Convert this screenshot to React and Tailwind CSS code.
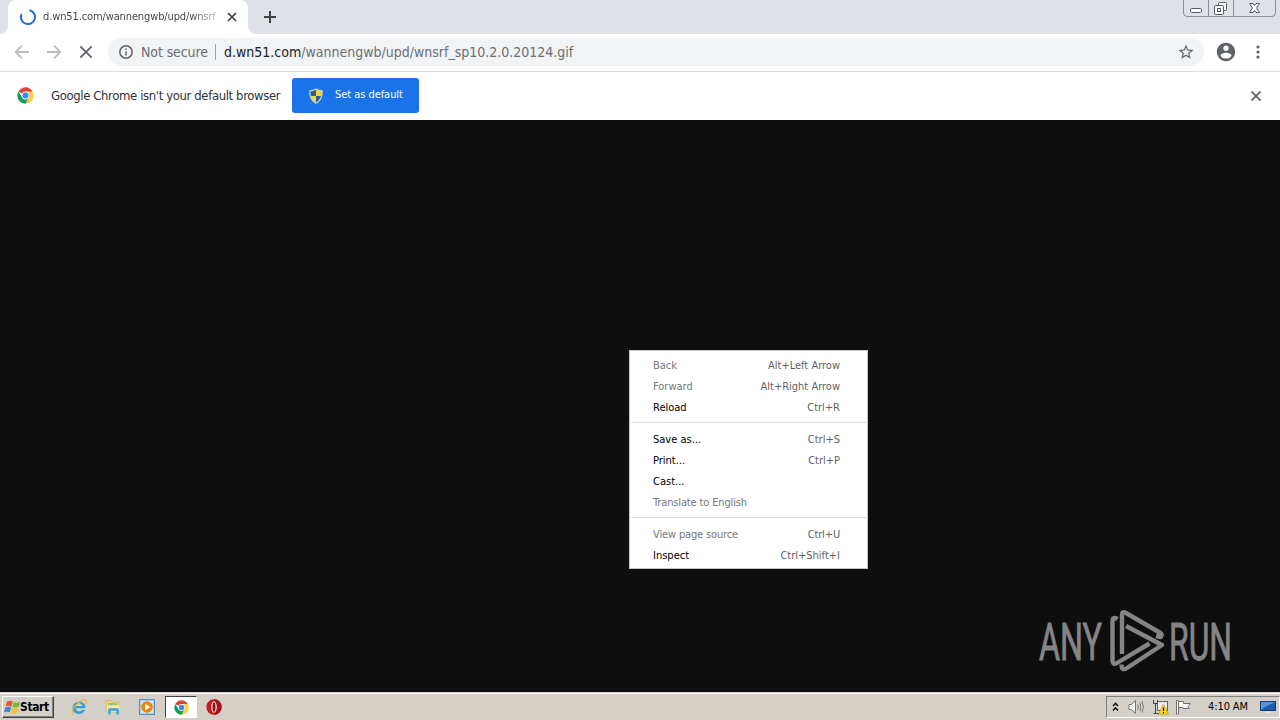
import { useId } from "react";

const menuGroups = [
    [
        { label: "Back", keys: "Alt+Left Arrow", disabled: true },
        { label: "Forward", keys: "Alt+Right Arrow", disabled: true },
        { label: "Reload", keys: "Ctrl+R" },
    ],
    [
        { label: "Save as...", keys: "Ctrl+S" },
        { label: "Print...", keys: "Ctrl+P" },
        { label: "Cast..." },
        { label: "Translate to English", disabled: true, tight: true },
    ],
    [
        { label: "View page source", keys: "Ctrl+U", disabled: true, tight: true },
        { label: "Inspect", keys: "Ctrl+Shift+I" },
    ],
];

const ChromeLogo = ({ className }) => (
    <svg viewBox="0 0 48 48" className={className}>
        <circle cx="24" cy="24" r="23" fill="#fff" />
        <path d="M24 24 L4.1 12.5 A23 23 0 0 1 43.9 12.5 Z" fill="#db4437" />
        <path d="M24 13 H44.2 A23 23 0 0 1 24 47 L33.5 29.5 Z" fill="#ffcd40" />
        <path d="M4.1 12.5 L14.5 29.5 L24 35 L33.5 29.5 L24 47 A23 23 0 0 1 4.1 12.5 Z" fill="#0f9d58" />
        <circle cx="24" cy="24" r="11" fill="#f1f1f1" />
        <circle cx="24" cy="24" r="8.5" fill="#4285f4" />
    </svg>
);

const Shield = ({ className }) => {
    const id = useId();
    const outline = "M8 1 C6 2.3 3.8 2.8 1.8 2.8 C1.6 8 3 12.5 8 15.2 C13 12.5 14.4 8 14.2 2.8 C12.2 2.8 10 2.3 8 1 Z";

    return (
        <svg viewBox="0 0 16 16" className={className}>
            <clipPath id={id}>
                <path d={outline} />
            </clipPath>
            <g clipPath={`url(#${id})`}>
                <rect width="8" height="8" fill="#28609f" />
                <rect x="8" width="8" height="8" fill="#f3d53a" />
                <rect y="8" width="8" height="8" fill="#f3d53a" />
                <rect x="8" y="8" width="8" height="8" fill="#28609f" />
            </g>
            <path d={outline} fill="none" stroke="#c9cfbd" strokeWidth="1.3" />
        </svg>
    );
};

const TabStrip = () => (
    <div className="flex h-[34px] items-start bg-[#dee1e6]">
        <div className="relative ml-2 flex h-[34px] w-60 items-center rounded-t-lg bg-white pl-3">
            <svg viewBox="0 0 8 8" className="absolute bottom-0 -left-2 size-2">
                <path d="M8 0 A8 8 0 0 1 0 8 H8 Z" fill="#fff" />
            </svg>
            <svg viewBox="0 0 8 8" className="absolute -right-2 bottom-0 size-2">
                <path d="M0 0 A8 8 0 0 0 8 8 H0 Z" fill="#fff" />
            </svg>
            <svg viewBox="0 0 16 16" className="size-4" fill="none" stroke="#1a6fd8" strokeWidth="2">
                <path d="M9.5 1.2 A7 7 0 1 1 1.6 5.2" />
            </svg>
            <span className="ml-[7px] w-[175px] bg-linear-to-r from-[#3c4043] from-85% to-[#3c404340] bg-clip-text pt-px text-[11px] tracking-[-0.12px] whitespace-nowrap text-transparent">
                d.wn51.com/wannengwb/upd/wnsrf
            </span>
            <svg viewBox="0 0 10 10" className="ml-[9px] size-[10px]" stroke="#3c4043" strokeWidth="1.7">
                <path d="M1 1 L9 9 M9 1 L1 9" />
            </svg>
        </div>
        <svg viewBox="0 0 12 12" className="mt-[11px] ml-4 size-3" stroke="#3c4043" strokeWidth="2">
            <path d="M6 0 V12 M0 6 H12" />
        </svg>
        <WindowButtons />
    </div>
);

const WindowButtons = () => (
    <svg viewBox="0 0 97 18" className="ml-auto h-[18px] w-[97px]" fill="none" stroke="#8b8f98">
        <path d="M0.5 0 V13 Q0.5 16.5 4 16.5 H89 Q92.5 16.5 92.5 13 V0 M25.5 0 V16 M50.5 0 V16" />
        <g stroke="#555a63">
            <rect x="7.5" y="8.5" width="11" height="4" rx="1" fill="#fff" />
            <rect x="35.5" y="2.5" width="8" height="8" rx="1" fill="#f2f3f5" />
            <rect x="31.5" y="5.5" width="9" height="9" rx="1" fill="#fff" />
            <rect x="34.5" y="8.5" width="3" height="3" />
            <path d="M66.5 3.5 H70 L71.5 5.5 L73 3.5 H76.5 L73.5 8 L76.5 12.5 H73 L71.5 10.5 L70 12.5 H66.5 L69.5 8 Z" fill="#fff" />
        </g>
    </svg>
);

const Toolbar = () => (
    <div className="flex h-[38px] items-center border-b border-[#dadce0] bg-white pb-px">
        <svg viewBox="0 0 16 16" className="ml-[14px] size-4" fill="none" stroke="#babcbe" strokeWidth="1.8">
            <path d="M15 8 H2.5 M8 1.7 L1.7 8 L8 14.3" />
        </svg>
        <svg viewBox="0 0 16 16" className="ml-4 size-4" fill="none" stroke="#babcbe" strokeWidth="1.8">
            <path d="M1 8 H13.5 M8 1.7 L14.3 8 L8 14.3" />
        </svg>
        <svg viewBox="0 0 16 16" className="ml-4 size-4" stroke="#5f6368" strokeWidth="1.8">
            <path d="M2.3 2.3 L13.7 13.7 M13.7 2.3 L2.3 13.7" />
        </svg>
        <div className="ml-[14px] flex h-7 w-[1096px] items-center rounded-full bg-[#f1f3f4] pl-[11px]">
            <svg viewBox="0 0 14 14" className="size-[14px]" fill="none" stroke="#5f6368" strokeWidth="1.5">
                <circle cx="7" cy="7" r="6.2" />
                <path d="M7 6.2 V10.4 M7 3.5 V5" />
            </svg>
            <span className="ml-2 w-[67px] text-[14px] tracking-[-0.1px] whitespace-nowrap text-[#6b6f74]">Not secure</span>
            <span className="ml-[7px] h-4 w-px bg-[#9fa3a8]" />
            <span className="ml-2 text-[14px] whitespace-nowrap text-[#6b6f74]">
                <span className="text-[#202124]">d.wn51.com</span>/wannengwb/upd/wnsrf_sp10.2.0.20124.gif
            </span>
            <svg viewBox="0 0 24 24" className="mr-[9px] ml-auto size-[18px]" fill="#5f6368">
                <path d="M22 9.24l-7.19-.62L12 2 9.19 8.63 2 9.24l5.46 4.73L5.82 21 12 17.27 18.18 21l-1.63-7.03L22 9.24zM12 15.4l-3.76 2.27 1-4.28-3.32-2.88 4.38-.38L12 6.1l1.71 4.04 4.38.38-3.32 2.88 1 4.28L12 15.4z" />
            </svg>
        </div>
        <svg viewBox="0 0 24 24" className="ml-[11px] size-[22px]" fill="#5f6368">
            <path d="M12 2C6.48 2 2 6.48 2 12s4.48 10 10 10 10-4.48 10-10S17.52 2 12 2zm0 3c1.66 0 3 1.34 3 3s-1.34 3-3 3-3-1.34-3-3 1.34-3 3-3zm0 14.2c-2.5 0-4.71-1.28-6-3.22.03-1.99 4-3.08 6-3.08 1.99 0 5.97 1.09 6 3.08-1.29 1.94-3.5 3.22-6 3.22z" />
        </svg>
        <svg viewBox="0 0 4 14" className="ml-[19px] h-[14px] w-1" fill="#5f6368">
            <circle cx="2" cy="2" r="1.6" />
            <circle cx="2" cy="7" r="1.6" />
            <circle cx="2" cy="12" r="1.6" />
        </svg>
    </div>
);

const InfoBar = () => (
    <div className="flex h-12 items-center bg-white pb-px">
        <ChromeLogo className="ml-[17px] size-[17px]" />
        <span className="ml-[17px] w-[229px] text-[13px] tracking-[-0.38px] whitespace-nowrap text-[#303236]">
            Google Chrome isn't your default browser
        </span>
        <button className="ml-3 flex h-[35px] w-[127px] items-center rounded-[3px] bg-[#1a73e8] pl-4 text-[11px] text-white">
            <Shield className="size-4" />
            <span className="ml-[11px] tracking-[-0.05px] whitespace-nowrap">Set as default</span>
        </button>
        <svg viewBox="0 0 10 10" className="mr-[19px] ml-auto size-[10px]" stroke="#5f6368" strokeWidth="1.8">
            <path d="M0.5 0.5 L9.5 9.5 M9.5 0.5 L0.5 9.5" />
        </svg>
    </div>
);

const ContextMenu = () => (
    <div className="absolute top-[350px] left-[629px] h-[219px] w-[239px] border border-[#c8c8c8] bg-white pt-1 text-[11px]">
        {menuGroups.map((group, i) => (
            <div key={i}>
                {i > 0 && <div className="mx-px mt-1 mb-1.5 h-px bg-[#dcdcdc]" />}
                {group.map(item => (
                    <div
                        key={item.label}
                        className={`flex h-[21px] items-center justify-between pt-0.5 pr-[27px] pl-[23px] whitespace-nowrap ${item.tight ? "tracking-[-0.14px]" : ""}`}
                    >
                        <span className={item.disabled ? "text-[#75777a]" : "text-black"}>{item.label}</span>
                        <span className="text-[#5f6163]">{item.keys}</span>
                    </div>
                ))}
            </div>
        ))}
    </div>
);

const Watermark = () => (
    <svg viewBox="0 0 220 70" className="absolute top-[606px] left-[1035px] h-[70px] w-[220px]">
        <g fill="#858585" stroke="#858585" strokeWidth="0.9" fontFamily="Roboto, sans-serif" fontSize="52">
            <text x="4" y="54" textLength="63" lengthAdjust="spacingAndGlyphs">ANY</text>
            <text x="134" y="54" textLength="63" lengthAdjust="spacingAndGlyphs">RUN</text>
        </g>
        <g fill="none" stroke="#858585" strokeWidth="4.4" strokeLinejoin="round">
            <path d="M82.5 13 Q77.5 10 77.5 16 V55 Q78 59.5 82 57 L114.5 37.5" />
            <path d="M87 48 V9 Q87 4.5 91 7 L125.5 27 Q128 29 125.5 31 L121 30" />
            <path d="M91 20 L127 39 L92 62 Q86.5 65.5 86.5 58.5" />
        </g>
    </svg>
);

const InternetExplorer = () => (
    <svg viewBox="0 0 16 16" className="size-4">
        <path d="M14.3 9.2 H4.6 C4.8 12.8 9.8 13.2 11 10.9 H14 C11.5 17.2 1.6 16 1.6 8.7 C1.6 1 14.8 0.4 14.3 9.2 Z M4.7 6.9 H11.3 C11 3.4 5.2 3.4 4.7 6.9 Z" fill="#2f9fdc" fillRule="evenodd" />
        <path d="M1.6 14.9 C-1.2 10 10 -0.4 14.7 1.2 C15.9 1.8 15.2 3.5 14.4 5" fill="none" stroke="#e2b83c" strokeWidth="1.3" />
    </svg>
);

const Explorer = () => (
    <svg viewBox="0 0 16 16" className="size-4">
        <path d="M1 1.5 H6 L7 3 H14 V13 H1 Z" fill="#f4d979" stroke="#d2b052" strokeWidth="0.7" />
        <path d="M3 4.3 H12 V5.8 H3 Z" fill="#76bd8d" />
        <path d="M1.5 6.3 H15 L14.5 13 H2 Z" fill="#faeaa5" stroke="#dcc277" strokeWidth="0.5" />
        <path d="M3 15.5 V11 Q3 9 5 9 H12 Q14 9 14 11 V15.5 H11.2 V12 H5.8 V15.5 Z" fill="#4fa6d8" />
    </svg>
);

const MediaPlayer = () => (
    <svg viewBox="0 0 16 16" className="size-4">
        <rect x="0.5" y="0.5" width="15" height="15" fill="#a8cdec" stroke="#5a8fc6" />
        <rect x="2" y="2" width="12" height="12" fill="#d3e8f8" />
        <circle cx="8" cy="8" r="5.8" fill="#ee8412" />
        <path d="M6.2 4.7 L11.3 8 L6.2 11.3 Z" fill="#fff" />
    </svg>
);

const Opera = () => (
    <svg viewBox="0 0 16 16" className="size-4">
        <circle cx="8" cy="8" r="7.7" fill="#c41a22" />
        <path d="M8 0.3 A7.7 7.7 0 0 1 8 15.7 Z" fill="#a31119" />
        <ellipse cx="8" cy="8" rx="2.8" ry="5.8" fill="#f6e9e9" />
        <ellipse cx="8" cy="8" rx="1.5" ry="4.8" fill="#8d1017" />
    </svg>
);

const WindowsFlag = () => (
    <svg viewBox="0 0 17 16" className="h-4 w-[17px]">
        <path d="M3 2.5 Q6 0.8 8.7 2.5 L7.4 7.4 Q4.5 6 1.6 7.4 Z" fill="#e4572b" />
        <path d="M9.6 3 Q12.5 4.6 16 2.8 L14.6 7.8 Q11.3 9.2 8.3 7.8 Z" fill="#79b53b" />
        <path d="M1.3 8.4 Q4.2 7 7.1 8.4 L5.8 13.3 Q3 12 0 13.3 Z" fill="#3f86cf" />
        <path d="M8 8.8 Q11 10.2 14.3 8.8 L13 13.7 Q9.8 15.3 6.7 13.7 Z" fill="#f5c131" />
    </svg>
);

const Tray = () => (
    <div className="ml-auto flex h-[22px] w-[174px] items-center border border-t-[#808080] border-r-white border-b-white border-l-[#808080]">
        <svg viewBox="0 0 7 10" className="ml-[5px] h-[10px] w-[7px]" fill="none" stroke="#000" strokeWidth="1.3">
            <path d="M1 4 L3.5 1.3 L6 4 M1 8.5 L3.5 5.8 L6 8.5" />
        </svg>
        <svg viewBox="0 0 17 16" className="ml-[9px] h-4 w-[17px]" fill="none" stroke="#777" strokeWidth="1">
            <path d="M1 5.5 H3.5 L7.5 1.5 V14.5 L3.5 10.5 H1 Z" fill="#f5f5f5" />
            <path d="M9.7 5.5 Q11 8 9.7 10.5 M11.8 3.8 Q14 8 11.8 12.2 M14 2.3 Q17 8 14 13.7" />
        </svg>
        <svg viewBox="0 0 17 16" className="ml-[7px] h-4 w-[17px]">
            <rect x="5.5" y="2.5" width="10" height="9" fill="#e6eaee" stroke="#666" />
            <path d="M1.5 1 V4.5 H5.5 V1 M3.5 4.5 V14.5 M1.5 14.5 H8" fill="none" stroke="#444" />
            <path d="M11.5 5.5 L16.5 15.2 H6.5 Z" fill="#ffd21f" stroke="#c99a08" strokeWidth="0.7" />
            <path d="M11.5 8.5 V12 M11.5 13 V14.2" stroke="#000" strokeWidth="1.2" />
        </svg>
        <svg viewBox="0 0 17 16" className="ml-1.5 h-4 w-[17px]" fill="#fafafa" stroke="#707070">
            <path d="M1.5 1.5 H3.5 V15 H1.5 Z" />
            <path d="M3.5 2.5 H8.5 V4.5 H15.5 L13 7.5 L14.5 9.5 H8 V8.5 H3.5 Z" />
        </svg>
        <span className="ml-4 text-[11px] tracking-[-0.1px] whitespace-nowrap text-black">4:10 AM</span>
        <svg viewBox="0 0 16 14" className="mr-[3px] ml-auto h-[14px] w-4">
            <rect x="0.5" y="1.5" width="15" height="9" fill="#1f5cad" stroke="#123a75" />
            <path d="M1 2 H15 L5 7 L1 10 Z" fill="#5396dc" />
            <path d="M5 12.5 H11" stroke="#d9e6f5" strokeWidth="1.5" />
        </svg>
    </div>
);

const Taskbar = () => (
    <div className="flex h-7 items-center border-t border-[#d4d0c8] bg-[#d4d0c8] pt-px shadow-[inset_0_1px_0_#fff]">
        <button className="ml-0.5 flex h-[22px] w-[52px] items-center border border-t-white border-r-[#404040] border-b-[#404040] border-l-white pl-px shadow-[inset_-1px_-1px_0_#808080]">
            <WindowsFlag />
            <span className="-ml-px text-[12px] font-bold tracking-[-0.4px] text-black">Start</span>
        </button>
        <div className="ml-[17px] flex items-center gap-[18px]">
            <InternetExplorer />
            <Explorer />
            <MediaPlayer />
        </div>
        <div className="ml-2.5 flex h-[22px] w-8 items-center justify-center border border-t-[#404040] border-r-white border-b-white border-l-[#404040] bg-white">
            <ChromeLogo className="size-[15px]" />
        </div>
        <div className="ml-[9px]">
            <Opera />
        </div>
        <Tray />
    </div>
);

const App = () => {
    return (
        <div className="relative flex h-[720px] w-[1280px] flex-col overflow-hidden bg-[#0e0e0e] font-['DejaVu_Sans_Condensed','DejaVu_Sans',sans-serif]">
            <TabStrip />
            <Toolbar />
            <InfoBar />
            <div className="flex-1" />
            <Taskbar />
            <ContextMenu />
            <Watermark />
        </div>
    );
};

export default App;
